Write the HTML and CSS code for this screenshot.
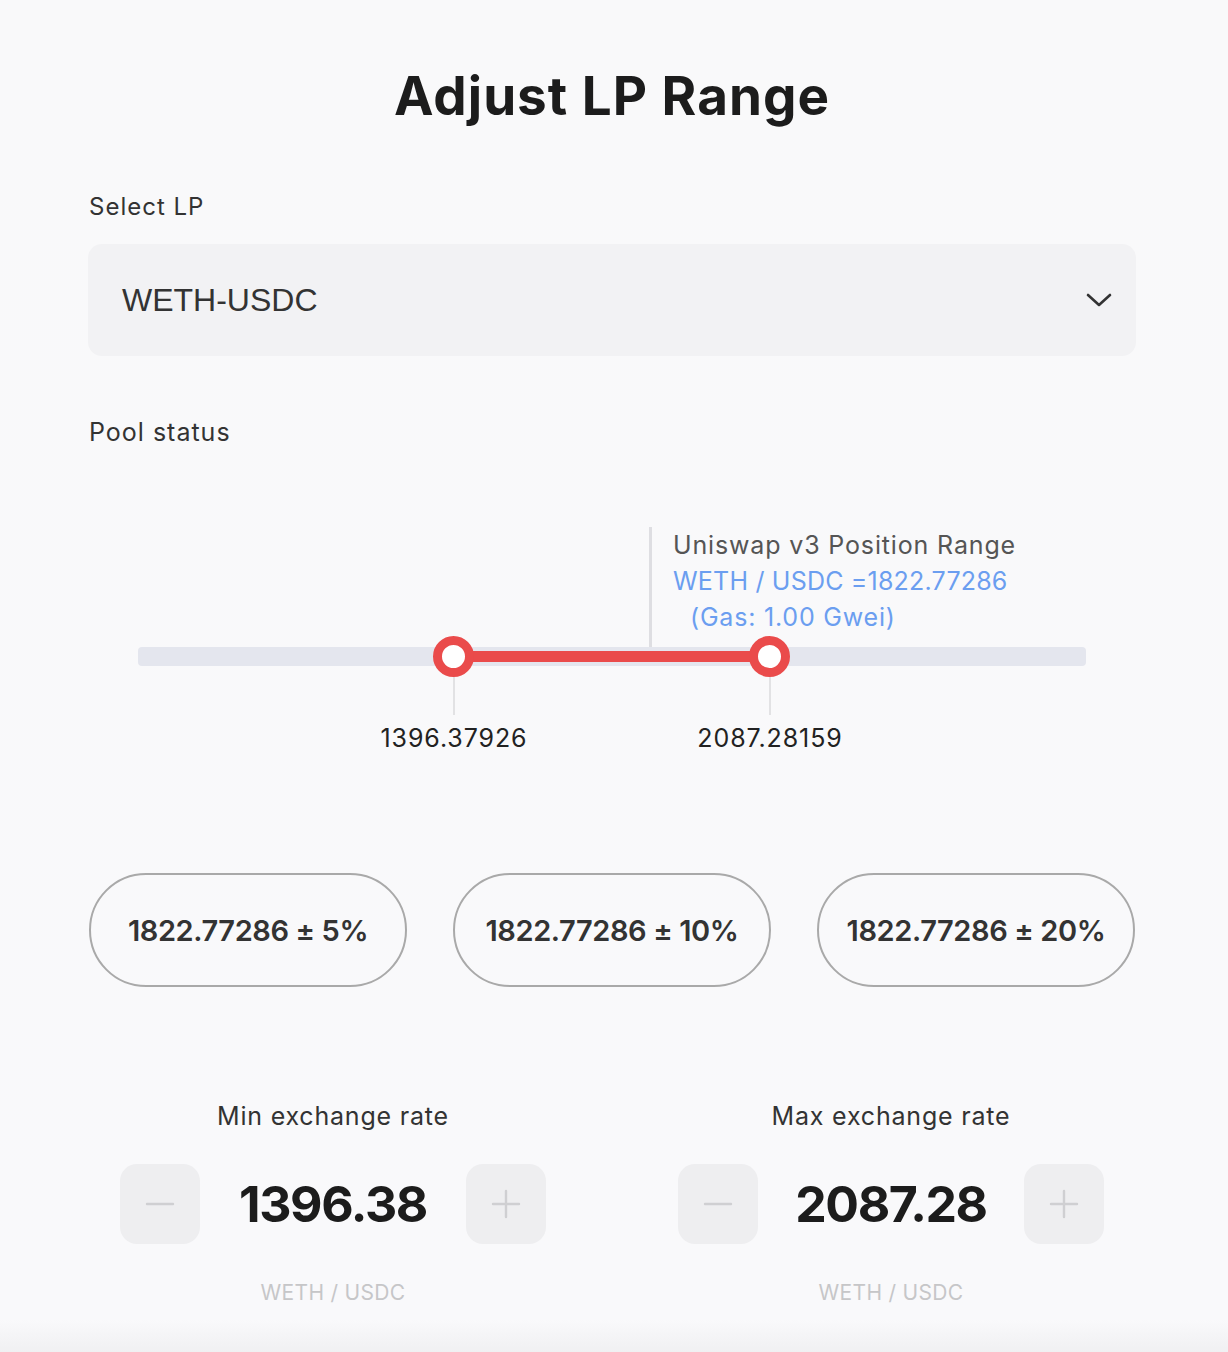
FILE: index.html
```html
<!DOCTYPE html>
<html>
<head>
<meta charset="utf-8">
<link rel="stylesheet" href="styles.css">
</head>
<body>
<main class="page">
  <h1 class="title">Adjust LP Range</h1>

  <label class="field-label">Select LP</label>
  <div class="select">
    <span class="select-value">WETH-USDC</span>
    <svg class="chevron" width="26" height="16" viewBox="0 0 26 16"><path d="M2 3 L13 13 L24 3" fill="none" stroke="#333" stroke-width="2.6" stroke-linecap="round" stroke-linejoin="round"/></svg>
  </div>

  <div class="field-label pool-label">Pool status</div>

  <div class="chart">
    <div class="track"></div>
    <div class="range"></div>
    <div class="current-line"></div>
    <div class="tooltip">
      <div class="tip-title">Uniswap v3 Position Range</div>
      <div class="tip-blue">WETH / USDC =1822.77286</div>
      <div class="tip-blue tip-gas">(Gas: 1.00 Gwei)</div>
    </div>
    <div class="tick tick-min"></div>
    <div class="tick tick-max"></div>
    <div class="handle handle-min"></div>
    <div class="handle handle-max"></div>
    <div class="tick-label label-min">1396.37926</div>
    <div class="tick-label label-max">2087.28159</div>
  </div>

  <div class="presets">
    <button class="preset">1822.77286 ± 5%</button>
    <button class="preset">1822.77286 ± 10%</button>
    <button class="preset">1822.77286 ± 20%</button>
  </div>

  <div class="rates">
    <div class="rate">
      <div class="rate-label">Min exchange rate</div>
      <div class="stepper">
        <button class="step"><svg width="30" height="30" viewBox="0 0 30 30"><path d="M2 15 H28" stroke="#cfcfd2" stroke-width="2.4" stroke-linecap="round"/></svg></button>
        <div class="rate-value">1396.38</div>
        <button class="step"><svg width="30" height="30" viewBox="0 0 30 30"><path d="M2 15 H28 M15 2 V28" stroke="#cfcfd2" stroke-width="2.4" stroke-linecap="round"/></svg></button>
      </div>
      <div class="rate-unit">WETH / USDC</div>
    </div>
    <div class="rate">
      <div class="rate-label">Max exchange rate</div>
      <div class="stepper">
        <button class="step"><svg width="30" height="30" viewBox="0 0 30 30"><path d="M2 15 H28" stroke="#cfcfd2" stroke-width="2.4" stroke-linecap="round"/></svg></button>
        <div class="rate-value">2087.28</div>
        <button class="step"><svg width="30" height="30" viewBox="0 0 30 30"><path d="M2 15 H28 M15 2 V28" stroke="#cfcfd2" stroke-width="2.4" stroke-linecap="round"/></svg></button>
      </div>
      <div class="rate-unit">WETH / USDC</div>
    </div>
  </div>
</main>
</body>
</html>
```

FILE: styles.css
```css
html, body {
  margin: 0;
  padding: 0;
}
body {
  background: linear-gradient(to bottom, #f9f9fa 0, #f9f9fb 1320px, #f0f0f2 1352px);
  min-height: 1352px;
  font-family: "Inter", "Noto Sans", sans-serif;
  color: #333;
}
.page {
  width: 1048px;
  margin-left: 88px;
  padding-top: 66px;
  display: flex;
  flex-direction: column;
}
.title {
  margin: 0;
  text-align: center;
  font-size: 53px;
  line-height: 60px;
  font-weight: 700;
  color: #1c1c1c;
  letter-spacing: 1px;
}
.field-label {
  margin-top: 66px;
  font-size: 24px;
  line-height: 30px;
  letter-spacing: 1px;
  color: #333;
  padding-left: 1px;
}
.select {
  margin-top: 22px;
  height: 112px;
  border-radius: 14px;
  background: #f2f2f4;
  display: flex;
  align-items: center;
  justify-content: space-between;
  padding: 0 24px 0 34px;
}
.select-value {
  font-family: "Liberation Sans", Arial, sans-serif;
  font-size: 32px;
  color: #333;
}
.chevron {
  display: block;
}
.pool-label {
  margin-top: 61px;
  font-size: 25px;
}
.chart {
  position: relative;
  height: 426px;
}
.track {
  position: absolute;
  left: 50px;
  width: 948px;
  top: 200px;
  height: 19px;
  border-radius: 4px;
  background: #e4e6ee;
}
.range {
  position: absolute;
  left: 366px;
  width: 316px;
  top: 204px;
  height: 11px;
  background: #ea4b4b;
}
.current-line {
  position: absolute;
  left: 561px;
  width: 3px;
  top: 80px;
  height: 120px;
  background: #dedee2;
}
.tooltip {
  position: absolute;
  left: 585px;
  top: 80px;
  font-size: 25px;
  line-height: 36px;
}
.tip-title {
  color: #555;
  letter-spacing: 0.85px;
}
.tip-blue {
  color: #6b9ef0;
  letter-spacing: 0.2px;
}
.tip-gas {
  padding-left: 17px;
  letter-spacing: 0.8px;
}
.tick {
  position: absolute;
  top: 228px;
  width: 2px;
  height: 40px;
  background: #e2e2e4;
}
.tick-min { left: 365px; }
.tick-max { left: 681px; }
.handle {
  position: absolute;
  top: 189px;
  width: 23px;
  height: 23px;
  border: 9px solid #ea4b4b;
  border-radius: 50%;
  background: #fff;
}
.handle-min { left: 345px; }
.handle-max { left: 661px; }
.tick-label {
  position: absolute;
  top: 275px;
  width: 200px;
  text-align: center;
  font-size: 25px;
  line-height: 32px;
  color: #222;
  letter-spacing: 0.9px;
}
.label-min { left: 266px; }
.label-max { left: 582px; }
.presets {
  display: flex;
  gap: 46px;
  padding-left: 1px;
}
.preset {
  width: 318px;
  height: 114px;
  border: 2px solid #a9a9a9;
  border-radius: 57px;
  background: transparent;
  font-family: "Inter", "Noto Sans", sans-serif;
  font-size: 29px;
  font-weight: 600;
  letter-spacing: -0.4px;
  color: #333;
  padding: 0;
}
.rates {
  margin-top: 112px;
  display: flex;
  justify-content: center;
  gap: 132px;
}
.rate {
  width: 426px;
  display: flex;
  flex-direction: column;
  align-items: center;
}
.rate-label {
  font-size: 25px;
  line-height: 34px;
  letter-spacing: 0.8px;
  color: #333;
}
.stepper {
  margin-top: 31px;
  width: 100%;
  display: flex;
  align-items: center;
  justify-content: space-between;
}
.step {
  width: 80px;
  height: 80px;
  border: none;
  border-radius: 17px;
  background: #eeeef0;
  padding: 0;
  display: flex;
  align-items: center;
  justify-content: center;
}
.step svg { display: block; }
.rate-value {
  font-size: 50px;
  font-weight: 700;
  color: #1c1c1c;
  line-height: 60px;
  letter-spacing: -1.4px;
}
.rate-unit {
  margin-top: 34px;
  font-size: 21px;
  line-height: 30px;
  letter-spacing: 0.3px;
  color: #c6c6c8;
}
```
